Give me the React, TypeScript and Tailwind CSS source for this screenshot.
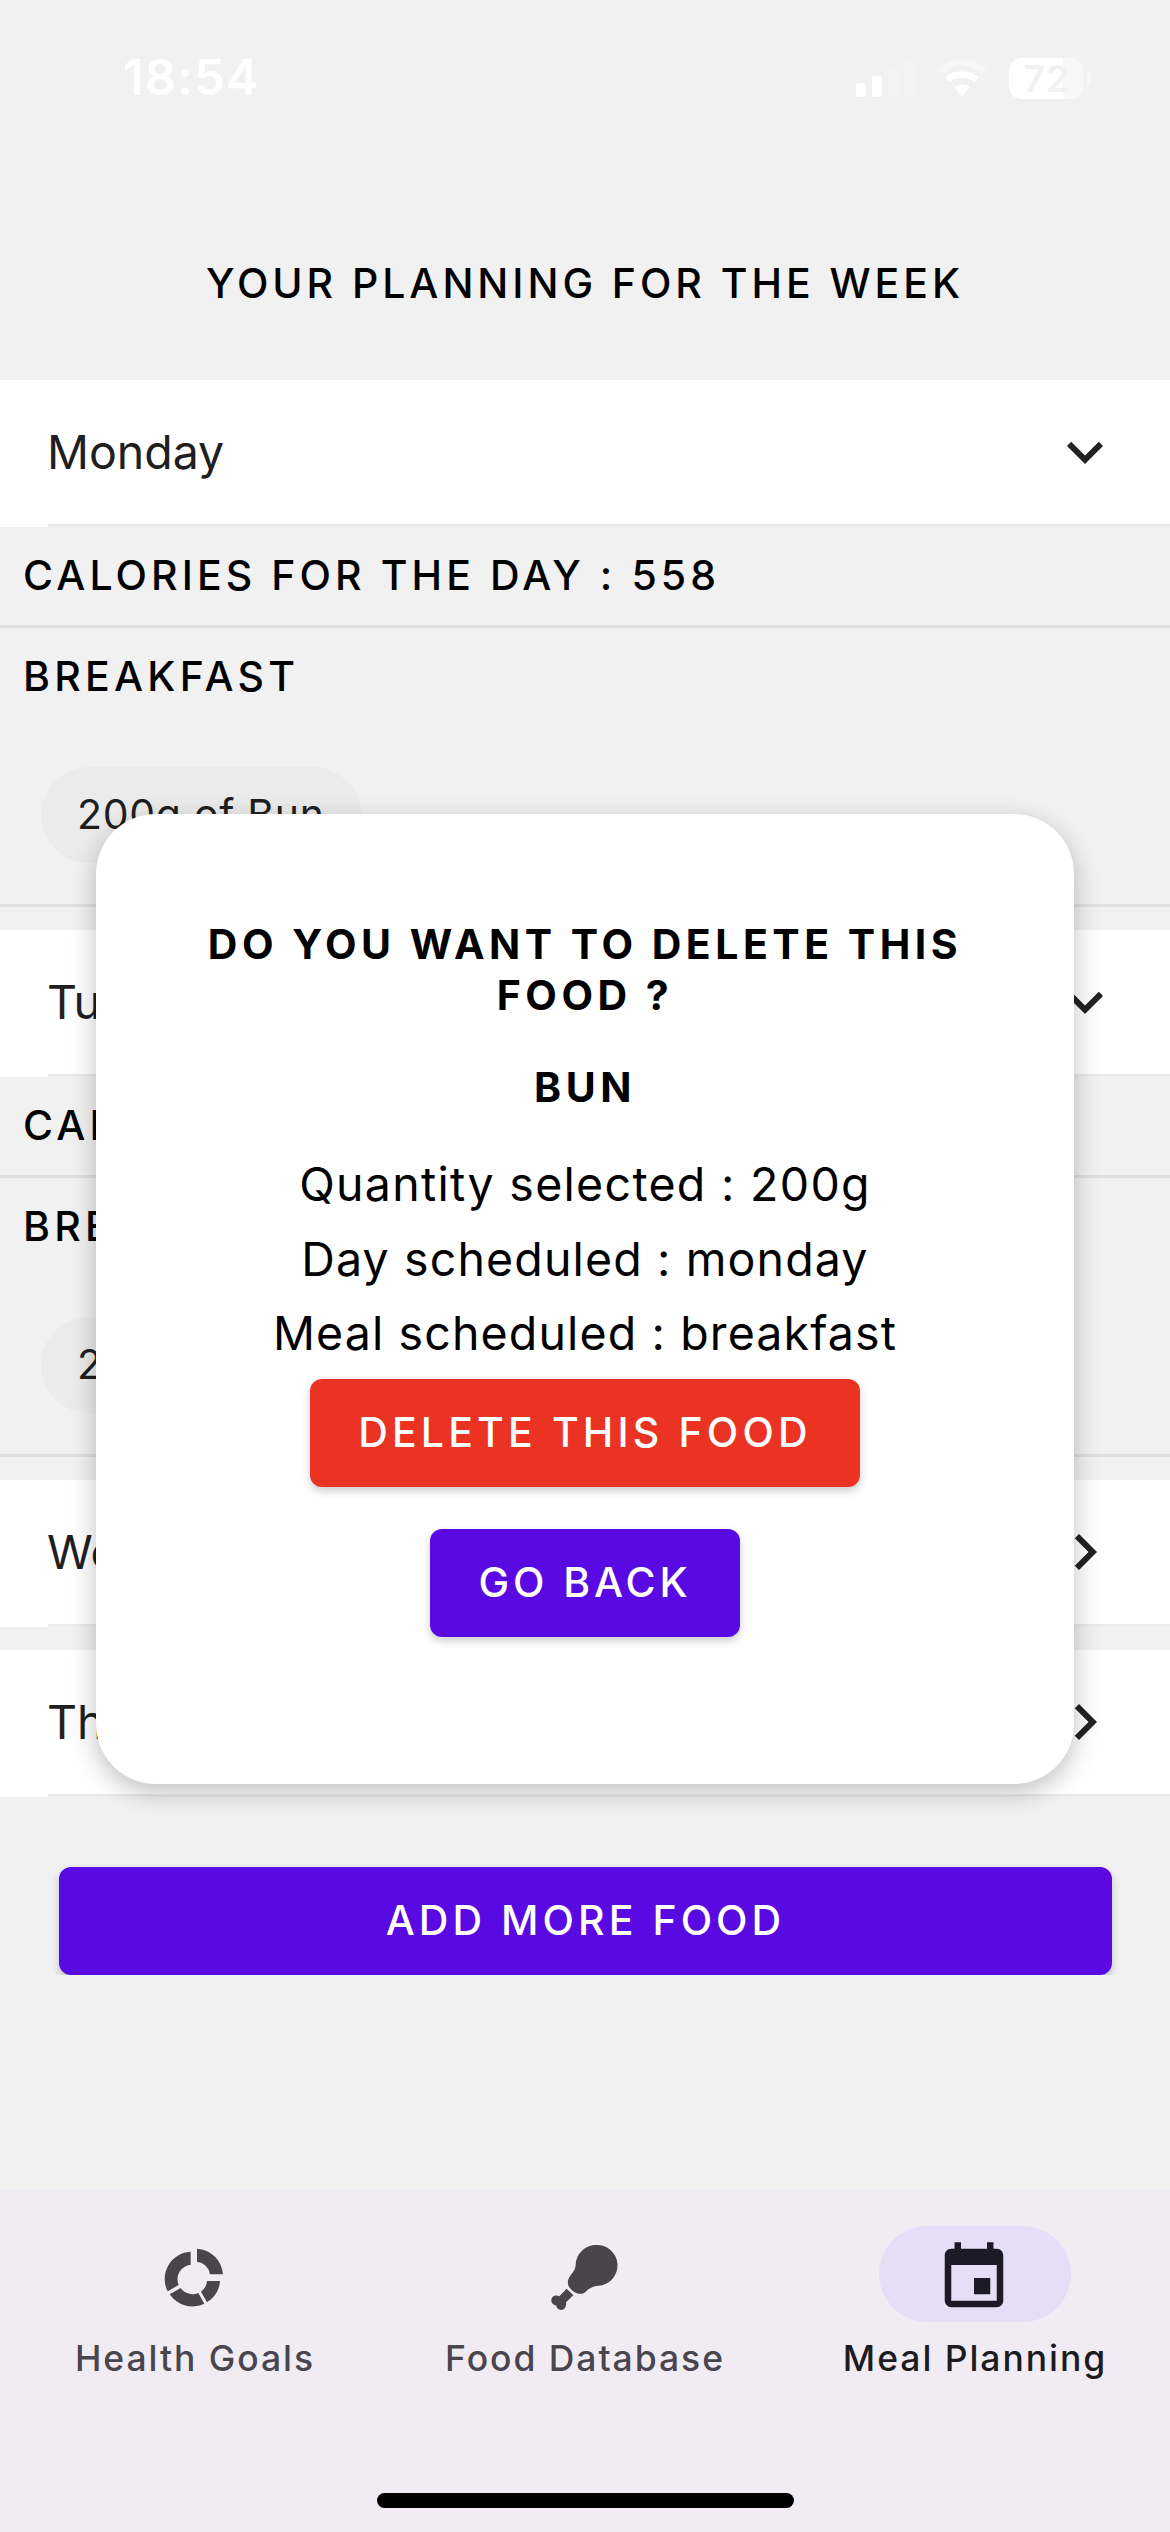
import type { ReactNode } from 'react';

type Day = { name: string; calories?: number; food?: string };

const days: Day[] = [
  { name: 'Monday', calories: 558, food: '200g of Bun' },
  { name: 'Tuesday', calories: 558, food: '200g of Bun' },
  { name: 'Wednesday' },
  { name: 'Thursday' },
];

function Chevron({ open }: { open: boolean }) {
  return (
    <svg viewBox="0 0 24 24" className="size-[72px] fill-[#222222]">
      {open ? (
        <path d="M7.41 8.58L12 13.17l4.59-4.59L18 10l-6 6-6-6z" />
      ) : (
        <path d="M8.59 16.58L13.17 12 8.59 7.41 10 6l6 6-6 6z" />
      )}
    </svg>
  );
}

function StatusBar() {
  return (
    <div className="flex h-[156px] items-center justify-between pr-[79px] pl-[123px] text-white">
      <span className="text-[49px] font-semibold leading-[60px] tracking-[1.1px]">18:54</span>
      <div className="flex items-center">
        <svg viewBox="0 0 134 44" className="h-[44px] w-[134px] fill-white">
          <rect x="0" y="27" width="10" height="14" rx="3" />
          <rect x="16" y="20" width="10" height="21" rx="3" />
          <rect x="32" y="12" width="10" height="29" rx="3" opacity=".2" />
          <rect x="48" y="4" width="10" height="37" rx="3" opacity=".2" />
          <path opacity=".35" d="M81.500 13.500C95 -.5 117 -.5 130.500 13.500L126 18C114.500 7 97.500 7 86 18Z" />
          <path d="M89 21.500C98.500 13 113.500 13 123 21.500L118.500 26C111 20 101 20 93.500 26Z" />
          <path d="M98 31C102.500 27.500 109.500 27.500 114 31L106 41Z" />
        </svg>
        <div className="ml-[19px] flex h-[41px] w-[75px] items-center justify-center rounded-[13px] bg-linear-to-r from-white from-72% to-[#f8f8f8] to-72%">
          <span className="pt-px pl-px text-[37px] font-semibold leading-[40px] tracking-[1.4px] text-[#f1f1f1]">
            72
          </span>
        </div>
        <div className="ml-[3px] h-[13px] w-[4px] rounded-r-full bg-[#f8f8f8]" />
      </div>
    </div>
  );
}

function DaySection({ day }: { day: Day }) {
  const open = day.food !== undefined;
  return (
    <section>
      <div className="bg-white">
        <div className="flex h-[144px] items-center justify-between pr-[49px] pb-px pl-[47px]">
          <span className="text-[46.5px] leading-[60px] tracking-[-0.05px] text-[#1f1f1f]">{day.name}</span>
          <Chevron open={open} />
        </div>
        <div className="ml-[48px] h-[3px] bg-[#ebebeb]" />
      </div>
      {open && (
        <div className="text-[41px] font-medium">
          <div className="flex h-[101px] items-center border-b-[3px] border-[#e0e0e0] pb-[2px] pl-[23px] leading-[50px] tracking-[4.08px] text-black">
            CALORIES FOR THE DAY : {day.calories}
          </div>
          <div className="h-[279px] border-b-[3px] border-[#e0e0e0]">
            <div className="flex h-[139px] items-start pt-[23px] pl-[23px] leading-[50px] tracking-[4.25px] text-black">
              BREAKFAST
            </div>
            <div className="ml-[41px] flex h-[96px] w-[320px] items-center rounded-full bg-[#ebebeb] pb-[3px] pl-[36px] leading-[50px] font-normal tracking-[0.7px] whitespace-nowrap text-[#1f1f1f]">
              {day.food}
            </div>
          </div>
        </div>
      )}
    </section>
  );
}

function Button({ className, children }: { className: string; children: ReactNode }) {
  return (
    <button
      className={`flex h-[108px] shrink-0 items-center justify-center rounded-[12px] pb-[2px] text-[41px] font-medium leading-[50px] text-white shadow-[0_4px_8px_rgba(0,0,0,0.2)] ${className}`}
    >
      {children}
    </button>
  );
}

function DeleteDialog() {
  return (
    <div
      role="dialog"
      className="absolute top-[814px] left-[96px] flex h-[970px] w-[978px] flex-col items-center rounded-[60px] bg-white pt-[105px] text-center text-black shadow-[0_8px_26px_rgba(0,0,0,0.25)]"
    >
      <h2 className="text-[41px] font-bold leading-[51px] tracking-[4.5px]">
        DO YOU WANT TO DELETE THIS
        <br />
        FOOD ?
      </h2>
      <h3 className="mt-[41px] text-[41px] font-bold leading-[51px] tracking-[4.6px]">BUN</h3>
      <div className="mt-[34px] text-[46.5px] leading-[74.5px]">
        <p className="tracking-[1.3px]">Quantity selected : 200g</p>
        <p className="tracking-[1.13px]">Day scheduled : monday</p>
        <p className="tracking-[1.13px]">Meal scheduled : breakfast</p>
      </div>
      <Button className="mt-[8px] w-[550px] bg-[#ea3323] tracking-[4.15px]">DELETE THIS FOOD</Button>
      <Button className="mt-[42px] w-[310px] bg-[#590ae3] tracking-[3.9px]">GO BACK</Button>
    </div>
  );
}

function DonutIcon() {
  return (
    <svg viewBox="0 0 270 270" className="size-[90px] fill-current">
      <path d="M122 65V104A44 44 0 0 0 86 165L53 184A82 82 0 0 1 122 65Z" />
      <path d="M141 56A83 83 0 0 1 219 133H180A44 44 0 0 0 141 95Z" />
      <path d="M171 153H210A83 83 0 0 1 171 217L153 185A44 44 0 0 0 171 153Z" />
      <path d="M59 193L92 174A44 44 0 0 0 145 189L163 221A82 82 0 0 1 59 193Z" />
    </svg>
  );
}

function DrumstickIcon() {
  return (
    <svg viewBox="0 0 270 270" className="size-[90px] fill-current">
      <path d="M168 45A61 61 0 0 1 175 167C156 169 147 176 137 185C127 194 113 193 103 186C97 182 91 176 87 170C81 160 83 147 91 137C102 123 106 117 107 104A61 61 0 0 1 168 45Z" />
      <path d="M80 176L100 196L78 217C80 231 73 240 63 240C54 240 50 234 48 226C40 226 34 219 34 211C34 200 46 193 58 199Z" />
    </svg>
  );
}

function CalendarIcon() {
  return (
    <svg viewBox="0 0 24 24" className="mt-[7px] mr-[2px] size-[78px] fill-current">
      <path d="M19 19H5V8H19M16 1V3H8V1H6V3H5C3.890 3 3 3.890 3 5V19A2 2 0 0 0 5 21H19A2 2 0 0 0 21 19V5C21 3.890 20.100 3 19 3H18V1M17 12H12V17H17V12Z" />
    </svg>
  );
}

function Tab({ icon, label, active = false }: { icon: ReactNode; label: string; active?: boolean }) {
  return (
    <div className={`flex flex-col items-center ${active ? 'text-[#1c1a27]' : 'text-[#49454e]'}`}>
      <div
        className={`flex h-[96px] w-[192px] items-center justify-center rounded-full ${active ? 'bg-[#e6def6]' : 'pt-[2px]'}`}
      >
        {icon}
      </div>
      <span
        className={`mt-[13px] text-[35.5px] font-medium leading-[48px] tracking-[1.95px] ${active ? 'text-[#1c1b1f]' : ''}`}
      >
        {label}
      </span>
    </div>
  );
}

export default function App() {
  return (
    <div className="relative flex h-[2532px] w-[1170px] flex-col overflow-hidden bg-[#f1f1f1] font-['Inter',sans-serif]">
      <StatusBar />
      <h1 className="pt-[97px] pb-[67px] text-center text-[41px] font-medium leading-[60px] tracking-[3.95px] text-black">
        YOUR PLANNING FOR THE WEEK
      </h1>
      <main className="flex h-[1595px] flex-col overflow-hidden">
        <div className="flex flex-col gap-[23px]">
          {days.map((day) => (
            <DaySection key={day.name} day={day} />
          ))}
        </div>
        <Button className="mt-[70px] mr-[58px] ml-[59px] bg-[#590ae3] tracking-[4.05px]">ADD MORE FOOD</Button>
      </main>
      <nav className="mt-auto flex h-[342px] flex-col items-center justify-between bg-[#f1ecf4] pt-[36px] pb-[24px]">
        <div className="grid w-full grid-cols-3">
          <Tab icon={<DonutIcon />} label="Health Goals" />
          <Tab icon={<DrumstickIcon />} label="Food Database" />
          <Tab icon={<CalendarIcon />} label="Meal Planning" active />
        </div>
        <div className="h-[15px] w-[417px] rounded-full bg-black" />
      </nav>
      <DeleteDialog />
    </div>
  );
}
